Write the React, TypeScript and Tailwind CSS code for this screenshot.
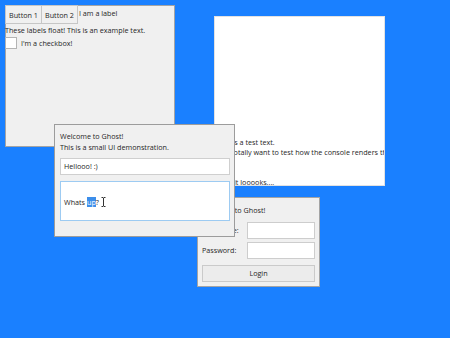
import React from 'react'

function IBeam() {
  return (
    <svg className="ml-[2px] inline-block" width="5" height="10" viewBox="0 0 5 10">
      <path d="M0.5 0.5h1.5l0.5 0.5l0.5-0.5h1.5M2.5 1v8M0.5 9.5h1.5l0.5-0.5l0.5 0.5h1.5" fill="none" stroke="#333" strokeWidth="1" />
    </svg>
  )
}

export default function App() {
  return (
    <div className="relative h-[338px] w-[450px] overflow-hidden bg-[#1a80ff] font-['Open_Sans',sans-serif] text-[7.2px] text-[#262626]">
      {/* back window: buttons + labels */}
      <div className="absolute left-[5px] top-[5px] h-[142px] w-[170px] border border-[#a4a4a4] bg-[#f0f0f0]">
        <div className="-ml-px -mt-px flex flex-col">
          <div className="flex items-start">
            <button className="flex h-[19px] w-[37px] items-center justify-center border border-[#c6c6c6] bg-[#f0f0f0] pt-[2px]">
              Button 1
            </button>
            <button className="-ml-px flex h-[19px] w-[37px] items-center justify-center border border-[#c6c6c6] bg-[#f0f0f0] pt-[2px]">
              Button 2
            </button>
            <span className="ml-px leading-[16px]">I am a label</span>
          </div>
          <div className="leading-[13px]">These labels float! This is an example text.</div>
          <div className="flex h-[12px] items-center">
            <span className="h-[12px] w-[12px] border border-[#b4b4b4] bg-white" />
            <span className="ml-[4px]">I'm a checkbox!</span>
          </div>
        </div>
      </div>

      {/* console-like white window */}
      <div className="absolute left-[214px] top-[16px] h-[170px] w-[171px] overflow-hidden border border-[#e2e2e2] bg-white pl-[2px] pt-[120px] leading-[10px] whitespace-pre">
        <div>This is a test text.</div>
        <div>So I totally want to test how the console renders this long line.</div>
        <div> </div>
        <div> </div>
        <div>How it looooks....</div>
      </div>

      {/* login window */}
      <div className="absolute left-[197px] top-[197px] flex h-[90px] w-[123px] flex-col border border-[#a4a4a4] bg-[#f0f0f0] px-[4px] pt-[7px]">
        <div className="leading-[11px]">Welcome to Ghost!</div>
        <div className="mt-[6px] flex items-center justify-between">
          <span>Username:</span>
          <div className="h-[17px] w-[68px] border border-[#cdcdcd] bg-white" />
        </div>
        <div className="mt-[3px] flex items-center justify-between">
          <span>Password:</span>
          <div className="h-[17px] w-[68px] border border-[#cdcdcd] bg-white" />
        </div>
        <button className="mt-[6px] flex h-[17px] w-full items-center justify-center border border-[#cacaca] bg-[#ececec]">
          Login
        </button>
      </div>

      {/* front window */}
      <div className="absolute left-[54px] top-[124px] h-[113px] w-[181px] border border-[#9c9c9c] bg-[#f0f0f0] px-[5px] pt-[6px]">
        <div className="leading-[11px]">
          <div>Welcome to Ghost!</div>
          <div>This is a small UI demonstration.</div>
        </div>
        <div className="mt-[5px] flex h-[17px] w-[170px] items-center border border-[#cfcfcf] bg-white pl-[3px]">
          Hellooo! :)
        </div>
        <div className="mt-[6px] flex h-[40px] w-[170px] items-center border border-[#9dcbf2] bg-white pl-[3px] pt-[2px]">
          <span>Whats </span>
          <span className="ml-[2px] bg-[#3c8eea] text-white">up</span>
          <span>?</span>
          <IBeam />
        </div>
      </div>
    </div>
  )
}
